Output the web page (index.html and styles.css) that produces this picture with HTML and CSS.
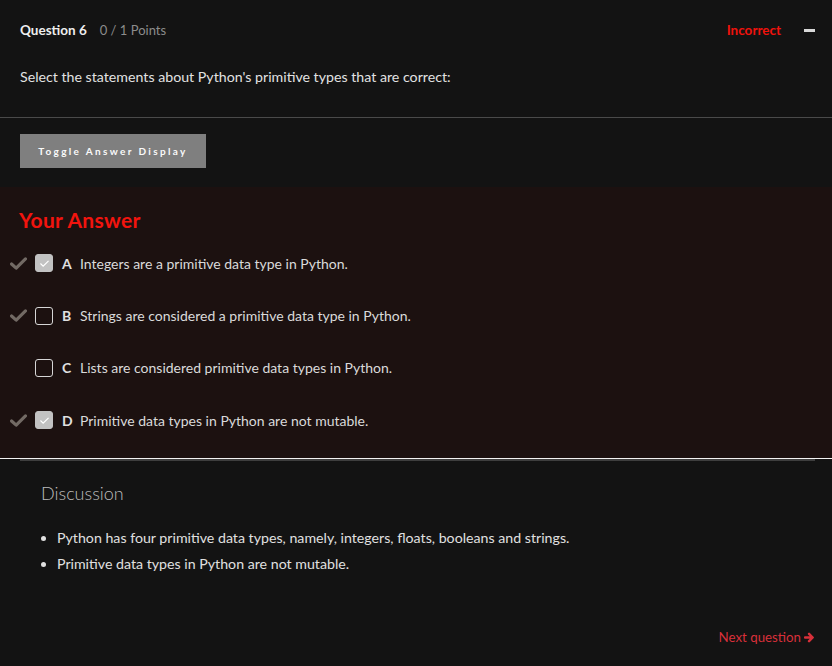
FILE: index.html
```html
<!DOCTYPE html>
<html>
<head>
<meta charset="utf-8">
<link rel="stylesheet" href="styles.css">
</head>
<body>
<div class="page">
  <header class="qhead">
    <div class="qtitle"><span class="qnum">Question 6</span><span class="qpts">0 / 1 Points</span></div>
    <div class="qstatus"><span class="incorrect">Incorrect</span><span class="collapse"></span></div>
  </header>
  <p class="qtext">Select the statements about Python's primitive types that are correct:</p>
  <div class="divider"></div>
  <div class="toggle-wrap"><button class="toggle">Toggle Answer Display</button></div>
  <section class="answer">
    <h2 class="answer-title">Your Answer</h2>
    <ul class="options">
      <li class="option">
        <span class="mark"><svg viewBox="0 0 18 14" width="17" height="13"><path d="M1.5 7.5 L6.5 12 L16.5 2" fill="none" stroke="#726a64" stroke-width="3.4" stroke-linecap="round" stroke-linejoin="round"/></svg></span>
        <span class="box checked"><svg viewBox="0 0 12 10" width="11" height="9"><path d="M1.5 5 L4.5 8 L10.5 2" fill="none" stroke="#fff" stroke-width="1.3"/></svg></span>
        <span class="letter">A</span><span class="otext">Integers are a primitive data type in Python.</span>
      </li>
      <li class="option">
        <span class="mark"><svg viewBox="0 0 18 14" width="17" height="13"><path d="M1.5 7.5 L6.5 12 L16.5 2" fill="none" stroke="#726a64" stroke-width="3.4" stroke-linecap="round" stroke-linejoin="round"/></svg></span>
        <span class="box"></span>
        <span class="letter">B</span><span class="otext">Strings are considered a primitive data type in Python.</span>
      </li>
      <li class="option">
        <span class="mark"></span>
        <span class="box"></span>
        <span class="letter">C</span><span class="otext">Lists are considered primitive data types in Python.</span>
      </li>
      <li class="option">
        <span class="mark"><svg viewBox="0 0 18 14" width="17" height="13"><path d="M1.5 7.5 L6.5 12 L16.5 2" fill="none" stroke="#726a64" stroke-width="3.4" stroke-linecap="round" stroke-linejoin="round"/></svg></span>
        <span class="box checked"><svg viewBox="0 0 12 10" width="11" height="9"><path d="M1.5 5 L4.5 8 L10.5 2" fill="none" stroke="#fff" stroke-width="1.3"/></svg></span>
        <span class="letter">D</span><span class="otext">Primitive data types in Python are not mutable.</span>
      </li>
    </ul>
  </section>
  <section class="discussion">
    <h3 class="disc-title">Discussion</h3>
    <ul class="disc-list">
      <li>Python has four primitive data types, namely, integers, floats, booleans and strings.</li>
      <li>Primitive data types in Python are not mutable.</li>
    </ul>
  </section>
  <footer class="foot">
    <a class="next" href="#">Next question <svg viewBox="0 0 12 12" width="11" height="11"><path d="M1 6 H9 M5.5 2 L9.5 6 L5.5 10" fill="none" stroke="#d8303a" stroke-width="2.6" stroke-linecap="round" stroke-linejoin="round"/></svg></a>
  </footer>
</div>
</body>
</html>
```
FILE: styles.css
```css
* { box-sizing: border-box; }
html, body { margin: 0; padding: 0; background: #131313; }
body { font-family: Lato, "Open Sans", sans-serif; color: #e0e0e0; width: 832px; height: 666px; overflow: hidden; }
.page { display: flex; flex-direction: column; }
.qhead { display: flex; justify-content: space-between; align-items: center; padding: 20px 17px 0 20px; height: 40px; }
.qtitle { display: flex; align-items: baseline; gap: 13px; font-size: 13.5px; }
.qnum { font-weight: 700; color: #eeeeee; }
.qpts { color: #8c8c8c; font-size: 13px; }
.qstatus { display: flex; align-items: center; gap: 23px; }
.incorrect { color: #f0120c; font-weight: 700; font-size: 13.5px; }
.collapse { width: 11px; height: 3px; background: #d8d8d8; display: block; }
.qtext { margin: 27px 0 0 20px; font-size: 14.2px; color: #e2e2e2; line-height: 20px; }
.divider { height: 1px; background: #4a4a4a; margin-top: 30px; }
.toggle-wrap { padding: 16px 20px 19px; }
.toggle { display: block; width: 186px; height: 34px; background: #7f7f7f; border: 0; color: #fafafa; font-family: Lato, sans-serif; font-size: 10px; font-weight: 700; letter-spacing: 2.35px; padding: 0; }
.answer { background: #1c1110; padding: 20px 0 0; height: 272px; border-bottom: 1px solid #f2f2f2; }
.answer-title { margin: 0 0 0 19px; color: #f2140e; font-size: 21px; font-weight: 700; line-height: 26px; letter-spacing: 0.3px; }
.options { list-style: none; margin: 8px 0 0; padding: 0; }
.option { display: flex; align-items: center; height: 52.4px; font-size: 14px; color: #dcdcdc; padding-bottom: 8px; }
.mark { width: 35px; padding-left: 10px; display: flex; align-items: center; }
.box { width: 18px; height: 18px; border: 1px solid #d6d6d6; border-radius: 3px; display: flex; align-items: center; justify-content: center; }
.box.checked { background: #c2c2c2; border-color: #c2c2c2; }
.letter { font-weight: 700; margin-left: 9px; width: 18px; color: #e0e0e0; }
.otext { color: #dadada; }
.discussion { border-top: 2px solid #3e3e3e; margin: 0 17px 0 20px; padding: 20px 0 0 21px; }
.disc-title { margin: 0; font-size: 18px; font-weight: 300; color: #bdbdbd; line-height: 24px; }
.disc-list { margin: 20px 0 0; padding: 0 0 0 16px; font-size: 14.2px; color: #e0e0e0; line-height: 26px; }
.disc-list li { padding-left: 0; }
.foot { display: flex; justify-content: flex-end; padding: 52px 17px 0; }
.next { color: #d8303a; text-decoration: none; font-size: 13.3px; display: flex; align-items: center; gap: 3px; }
```
